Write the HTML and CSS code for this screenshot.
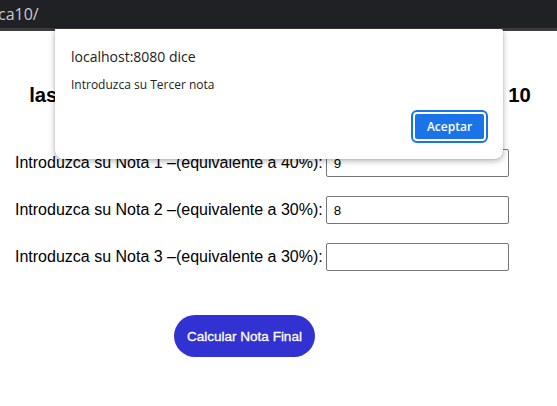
FILE: index.html
```html
<!DOCTYPE html>
<html lang="es">
<head>
<meta charset="utf-8">
<title>Practica 10</title>
<link rel="stylesheet" href="styles.css">
</head>
<body>
<div class="topbar"><span class="url">ca10/</span></div>
<div class="strip"></div>
<main class="page">
  <h1 class="title">las notas finales del curso se califican de 0 hasta 10</h1>
  <form class="form">
    <div class="row"><label class="label">Introduzca su Nota 1 –(equivalente a 40%):</label><input class="field" type="text" value="9"></div>
    <div class="row"><label class="label">Introduzca su Nota 2 –(equivalente a 30%):</label><input class="field" type="text" value="8"></div>
    <div class="row"><label class="label">Introduzca su Nota 3 –(equivalente a 30%):</label><input class="field" type="text" value=""></div>
    <div class="actions"><button class="calc" type="button">Calcular Nota Final</button></div>
  </form>
</main>
<div class="dialog">
  <div class="dlg-title">localhost:8080 dice</div>
  <div class="dlg-msg">Introduzca su Tercer nota</div>
  <div class="dlg-actions"><button class="ok" type="button">Aceptar</button></div>
</div>
</body>
</html>
```
FILE: styles.css
```css
html, body { margin: 0; padding: 0; background: #fff; }
body { font-family: "Liberation Sans", Arial, sans-serif; overflow: hidden; height: 406px; }
.topbar { height: 28px; background: #202124; display: flex; align-items: center; overflow: hidden; }
.url { color: #c8cacd; font-family: "Open Sans", "Noto Sans", sans-serif; font-size: 16px; margin-left: -2px; line-height: 1; padding-bottom: 1px; }
.strip { height: 3px; background: #3c3c3c; }
.page { padding: 0 0 0 15px; }
.title { font-size: 20.3px; font-weight: bold; text-align: center; margin: 51px 0 0; line-height: 26px; white-space: nowrap; padding-right: 12px; }
.form { margin-top: 41px; display: flex; flex-direction: column; }
.row { display: flex; align-items: center; height: 28px; margin-bottom: 19px; font-size: 16px; color: #000; }
.label { margin-right: 3px; }
.field { width: 183px; height: 28px; box-sizing: border-box; border: 1px solid #767676; border-radius: 2px; padding: 1px 7px; font-family: "Liberation Sans", Arial, sans-serif; font-size: 13.33px; color: #000; }
.actions { margin-top: 25px; padding-left: 159px; }
.calc { width: 141px; height: 42px; border: none; border-radius: 21px; background: #3232d2; color: #fff; font-family: "Liberation Sans", Arial, sans-serif; font-size: 13.5px; font-weight: normal; -webkit-text-stroke: 0.3px #fff; padding: 0; }
.dialog { position: absolute; left: 55px; top: 29px; width: 448px; height: 130px; box-sizing: border-box; background: #fff; border-radius: 0 2px 8px 8px; box-shadow: 0 2px 6px rgba(0,0,0,0.3), 0 0 1px rgba(0,0,0,0.4); padding: 18px 17px 0 16px; font-family: "Open Sans", "Noto Sans", sans-serif; color: #202124; }
.dlg-title { font-size: 14px; line-height: 20px; }
.dlg-msg { font-size: 12px; line-height: 16px; margin-top: 10px; }
.dlg-actions { display: flex; justify-content: flex-end; margin-top: 19px; }
.ok { width: 73px; height: 29px; background: #1a73e8; color: #fff; border: 2px solid #fff; outline: 2px solid #1a73e8; border-radius: 4px; font-family: "Open Sans", "Noto Sans", sans-serif; font-size: 12px; font-weight: 600; padding: 0; }
```
